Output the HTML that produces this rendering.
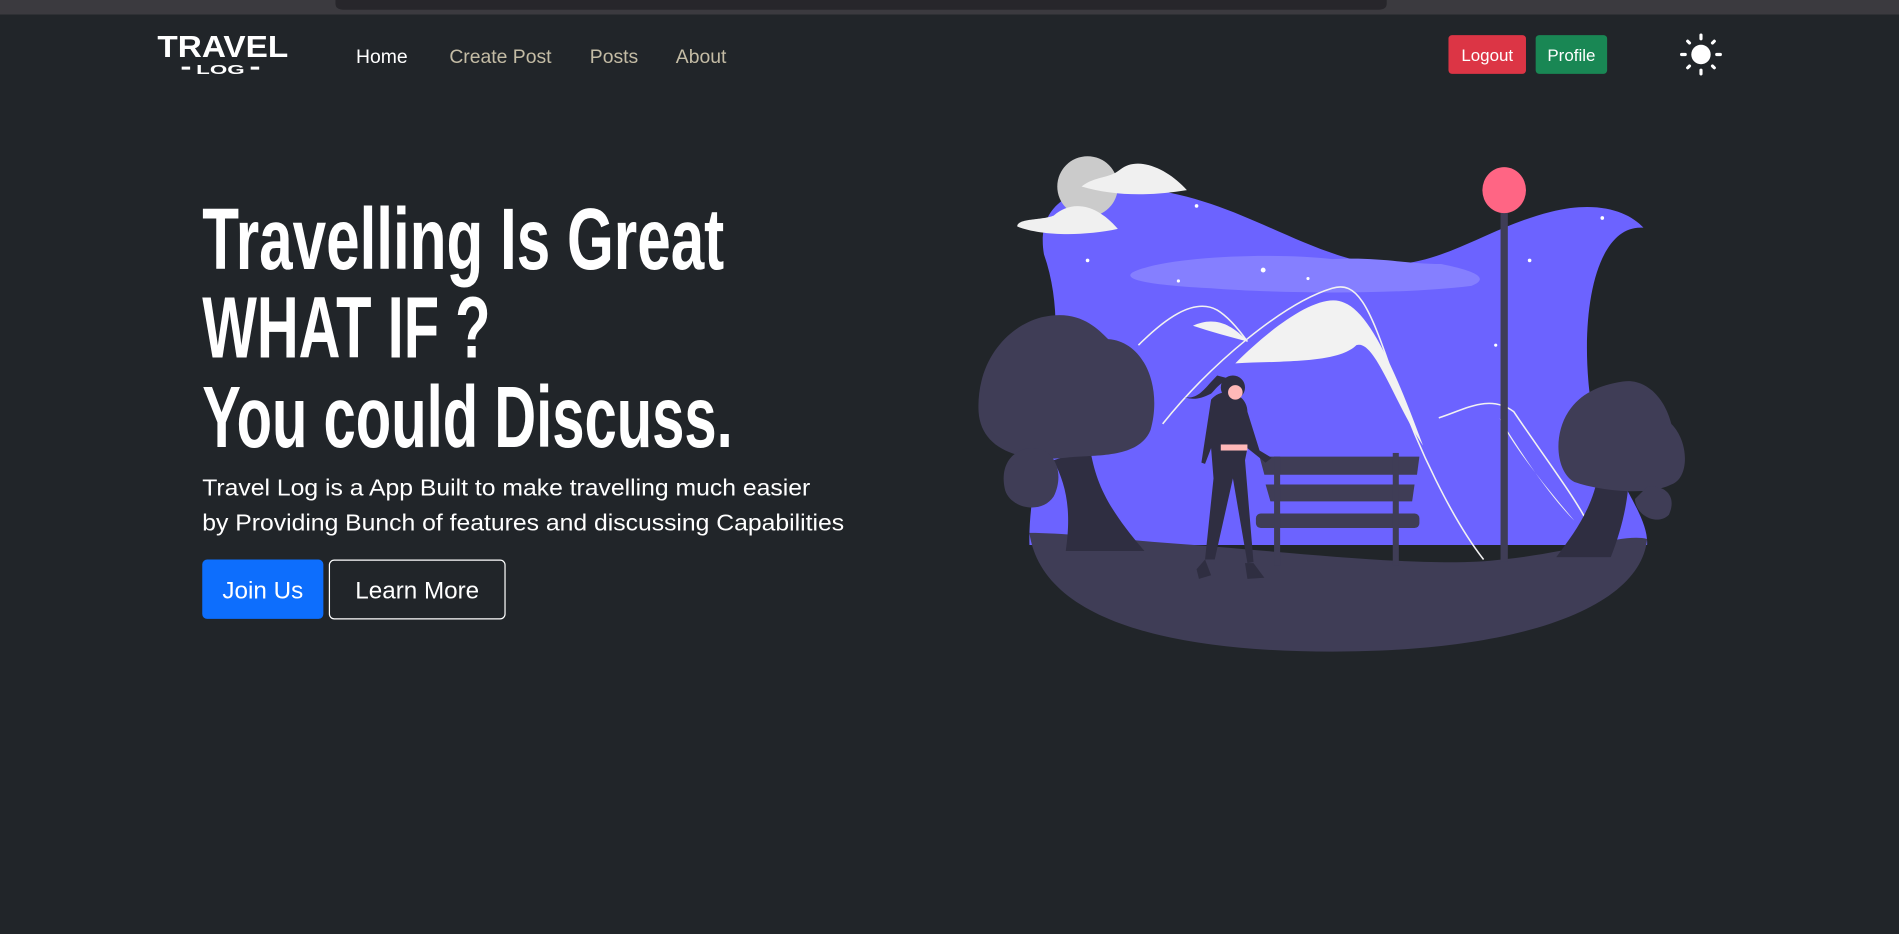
<!DOCTYPE html>
<html><head><meta charset="utf-8"><style>
html,body{margin:0;padding:0;background:#212529;width:1899px;height:934px;overflow:hidden}
svg{position:absolute;left:0;top:0}
</style></head><body>
<svg width="1899" height="934" viewBox="0 0 1568 771.2" xmlns="http://www.w3.org/2000/svg" font-family="Liberation Sans, sans-serif">
<rect width="1568" height="772" fill="#212529"/>
<rect width="1568" height="12" fill="#3b3a3f"/>
<path d="M277,0 H1145 V3 Q1145,8 1138,8 H284 Q277,8 277,3 Z" fill="#27262b"/>
<!-- logo -->
<text x="130" y="47" font-size="25" font-weight="bold" fill="#fff" textLength="108" lengthAdjust="spacingAndGlyphs">TRAVEL</text>
<rect x="150" y="55" width="7" height="2.5" fill="#fff"/><rect x="207" y="55" width="7" height="2.5" fill="#fff"/>
<text x="162" y="61" font-size="11" font-weight="bold" fill="#fff" textLength="40" lengthAdjust="spacingAndGlyphs">LOG</text>
<!-- nav -->
<g font-size="16">
<text x="294" y="52" fill="#fff">Home</text>
<text x="371" y="52" fill="#c4bca5">Create Post</text>
<text x="487" y="52" fill="#c4bca5">Posts</text>
<text x="558" y="52" fill="#c4bca5">About</text>
</g>
<rect x="1196" y="29" width="64" height="32" rx="3" fill="#dc3545"/>
<text x="1228" y="50.5" font-size="14" fill="#fff" text-anchor="middle">Logout</text>
<rect x="1268" y="29" width="59" height="32" rx="3" fill="#198754"/>
<text x="1297.5" y="50.5" font-size="14" fill="#fff" text-anchor="middle">Profile</text>
<!-- sun -->
<g transform="translate(1404.5,45)" stroke="#fff" stroke-width="2.6" stroke-linecap="round">
<circle r="8" fill="#fff" stroke="none"/>
<line y1="-13" y2="-16"/><line y1="13" y2="16"/><line x1="-13" x2="-16"/><line x1="13" x2="16"/>
<line x1="9.5" y1="-9.5" x2="11" y2="-11"/><line x1="-9.5" y1="-9.5" x2="-11" y2="-11"/>
<line x1="9.5" y1="9.5" x2="11" y2="11"/><line x1="-9.5" y1="9.5" x2="-11" y2="11"/>
</g>
<!-- hero text -->
<g font-weight="bold" fill="#fff" font-size="72">
<text x="167" y="222" textLength="431" lengthAdjust="spacingAndGlyphs">Travelling Is Great</text>
<text x="167" y="295" textLength="238" lengthAdjust="spacingAndGlyphs">WHAT IF ?</text>
<text x="167" y="369" textLength="438" lengthAdjust="spacingAndGlyphs">You could Discuss.</text>
</g>
<g font-size="19" fill="#fff">
<text x="167" y="409" textLength="502" lengthAdjust="spacingAndGlyphs">Travel Log is a App Built to make travelling much easier</text>
<text x="167" y="438" textLength="530" lengthAdjust="spacingAndGlyphs">by Providing Bunch of features and discussing Capabilities</text>
</g>
<rect x="167" y="462" width="100" height="49" rx="4" fill="#0d6efd"/>
<text x="217" y="494" font-size="20" fill="#fff" text-anchor="middle">Join Us</text>
<rect x="272" y="462.5" width="145" height="48.5" rx="4" fill="none" stroke="#fff" stroke-width="1"/>
<text x="344.5" y="494" font-size="20" fill="#fff" text-anchor="middle">Learn More</text>
<!-- illustration (display coords) -->
<g transform="translate(0,0)">
<path d="M862,210 C855,170 885,150 935,155 C1010,160 1060,200 1120,215 C1180,230 1220,190 1280,175 C1320,165 1345,175 1357,188 C1320,185 1305,250 1312,320 C1318,380 1362,420 1360,450 L850,450 C848,380 890,290 862,210 Z" fill="#6c63ff"/>
<path d="M935,225 C960,212 1050,208 1100,214 C1140,212 1160,218 1190,218 C1220,224 1230,230 1215,236 C1150,244 1050,242 1000,238 C960,236 925,232 935,225 Z" fill="#857fff"/>
<g fill="#fff"><circle cx="988" cy="170" r="1.5"/><circle cx="898" cy="215" r="1.5"/><circle cx="1043" cy="223" r="2"/><circle cx="973" cy="232" r="1.3"/><circle cx="1080" cy="230" r="1.3"/><circle cx="1263" cy="215" r="1.5"/><circle cx="1323" cy="180" r="1.5"/><circle cx="1235" cy="285" r="1.3"/></g>
<path d="M1020,300 C1050,270 1090,240 1110,250 C1130,258 1150,300 1175,368 C1150,330 1135,280 1120,285 C1105,300 1060,298 1020,300 Z" fill="#f2f2f2"/>
<path d="M985,269 C1000,262 1015,265 1030,282 C1015,278 1000,274 985,269 Z" fill="#f2f2f2"/>
<path d="M1238,345 C1250,370 1275,400 1300,430 C1280,410 1260,380 1238,345 Z" fill="#f2f2f2"/>
<g fill="none" stroke="#f2f2f2" stroke-width="1.3">
<path d="M940,285 C960,265 985,245 1005,256 C1015,262 1025,275 1030,282"/>
<path d="M960,350 C1000,300 1060,250 1100,238 C1120,232 1130,250 1150,310 C1170,370 1200,430 1225,462"/>
<path d="M1188,345 C1210,338 1230,325 1250,340 C1270,370 1300,410 1310,430"/>
</g>
<path d="M850,440 C880,440 920,445 960,448 C1060,455 1180,470 1240,462 C1300,456 1340,440 1360,445 C1355,500 1260,538 1100,538 C960,538 860,510 850,440 Z" fill="#3f3d56"/>
<!-- clouds/moon -->
<circle cx="898" cy="154" r="25" fill="#cbcbcb"/>
<path d="M893,154 C905,145 915,148 925,140 C940,128 965,140 980,157 C950,162 920,162 893,154 Z" fill="#f0f0f0"/>
<path d="M840,187 C840,180 860,182 870,178 C885,165 905,168 923,189 C895,195 860,195 840,187 Z" fill="#f0f0f0"/>
<!-- pole -->
<rect x="1239" y="170" width="6" height="294" fill="#3f3d56"/>
<ellipse cx="1242" cy="157" rx="18" ry="19" fill="#ff6584"/>
<!-- trees -->
<path d="M880,455 C885,420 880,400 870,380 L900,370 C905,400 915,420 945,455 Z" fill="#2f2e41"/>
<path d="M860,262 C890,255 905,270 915,280 C945,282 960,320 950,355 C940,380 900,375 880,378 C840,382 810,370 808,340 C806,300 830,270 860,262 Z" fill="#3f3d56"/>
<path d="M850,370 C870,368 880,390 870,410 C860,425 835,420 830,405 C825,385 835,372 850,370 Z" fill="#3f3d56"/>
<path d="M1320,390 C1315,420 1300,440 1285,460 L1330,460 C1340,435 1345,410 1345,390 Z" fill="#2f2e41"/>
<path d="M1340,315 C1360,312 1375,330 1380,350 C1395,365 1395,395 1380,400 C1360,410 1320,405 1300,398 C1285,390 1282,360 1295,340 C1305,325 1320,318 1340,315 Z" fill="#3f3d56"/>
<path d="M1360,402 C1375,400 1385,410 1378,425 C1368,435 1350,425 1350,412 Z" fill="#3f3d56"/>
<!-- bench -->
<g fill="#3f3d56">
<path d="M1040,377 H1172 L1170,392 H1044 Z"/><path d="M1045,400 H1168 L1166,414 H1049 Z"/>
<rect x="1037" y="424" width="135" height="12" rx="4"/>
<rect x="1052" y="377" width="5" height="90"/><rect x="1150" y="374" width="5" height="93"/>
</g>
<!-- person -->
<g fill="#2f2e41">
<path d="M1000,330 C1010,318 1030,325 1030,340 L1040,372 L1050,378 L1045,382 L1030,370 L1028,380 L1035,464 L1030,465 L1018,395 L1003,462 L995,462 L1002,395 L1000,370 L995,383 L992,382 Z"/>
<path d="M1020,314 C1010,312 1005,320 1000,325 C990,330 985,330 978,328 C990,330 995,320 1005,310 Z"/>
<circle cx="1018" cy="320" r="10"/>
<path d="M988,470 L995,462 L1000,475 L990,478 Z"/><path d="M1028,465 L1035,465 L1044,477 L1030,478 Z"/>
</g>
<circle cx="1020" cy="324" r="6" fill="#ffb8b8"/>
<rect x="1008" y="367" width="22" height="5" fill="#ffb8b8"/>
</g>
</svg>
</body></html>
